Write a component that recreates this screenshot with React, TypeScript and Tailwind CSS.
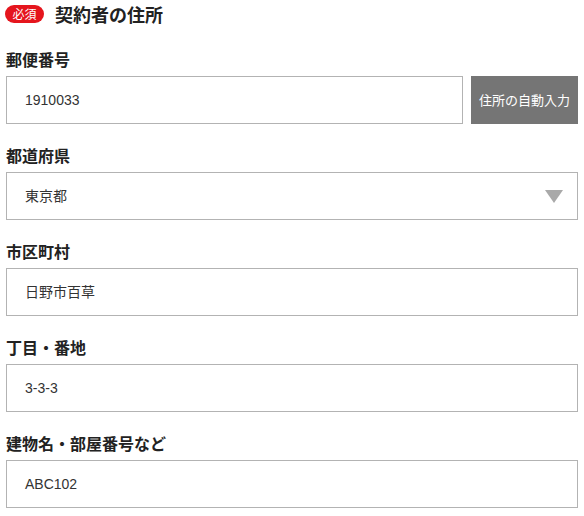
import React from "react";

const font = { fontFamily: '"Noto Sans CJK JP", "Noto Sans", sans-serif' };
const valueFont = { fontFamily: '"Liberation Sans", "Noto Sans CJK JP", sans-serif' };

function Field({ label, value, select }: { label: string; value: string; select?: boolean }) {
  return (
    <div className="mt-[19px]">
      <div className="text-[16px] leading-[24px] font-bold text-[#222] mb-[5px]">{label}</div>
      <div
        className="relative h-[48px] w-[572px] border border-[#b3b3b3] bg-white flex items-center pl-[18px] text-[14px] text-[#333]"
        style={valueFont}
      >
        {value}
        {select && (
          <svg className="absolute right-[14px] top-[17px]" width="18" height="13" viewBox="0 0 18 13">
            <polygon points="0,0 18,0 9,13" fill="#a9a9a9" />
          </svg>
        )}
      </div>
    </div>
  );
}

export default function App() {
  return (
    <div className="w-[584px] h-[516px] bg-white pl-[6px] overflow-hidden" style={font}>
      <div className="h-[28px] flex items-center">
        <span className="inline-flex items-center justify-center h-[18px] w-[39px] rounded-full bg-[#e5151d] text-white text-[12px] leading-none ml-[-1px]">
          必須
        </span>
        <span className="ml-[11px] text-[18px] font-bold text-[#222]">契約者の住所</span>
      </div>
      <div className="mt-[19px]">
        <div className="text-[16px] leading-[24px] font-bold text-[#222] mb-[5px]">郵便番号</div>
        <div className="flex gap-[8px]">
          <div
            className="h-[48px] w-[457px] border border-[#b3b3b3] bg-white flex items-center pl-[18px] text-[14px] text-[#333]"
            style={valueFont}
          >
            1910033
          </div>
          <button className="h-[48px] w-[107px] bg-[#757575] text-white text-[13px]">住所の自動入力</button>
        </div>
      </div>
      <Field label="都道府県" value="東京都" select />
      <Field label="市区町村" value="日野市百草" />
      <Field label="丁目・番地" value="3-3-3" />
      <Field label="建物名・部屋番号など" value="ABC102" />
    </div>
  );
}
